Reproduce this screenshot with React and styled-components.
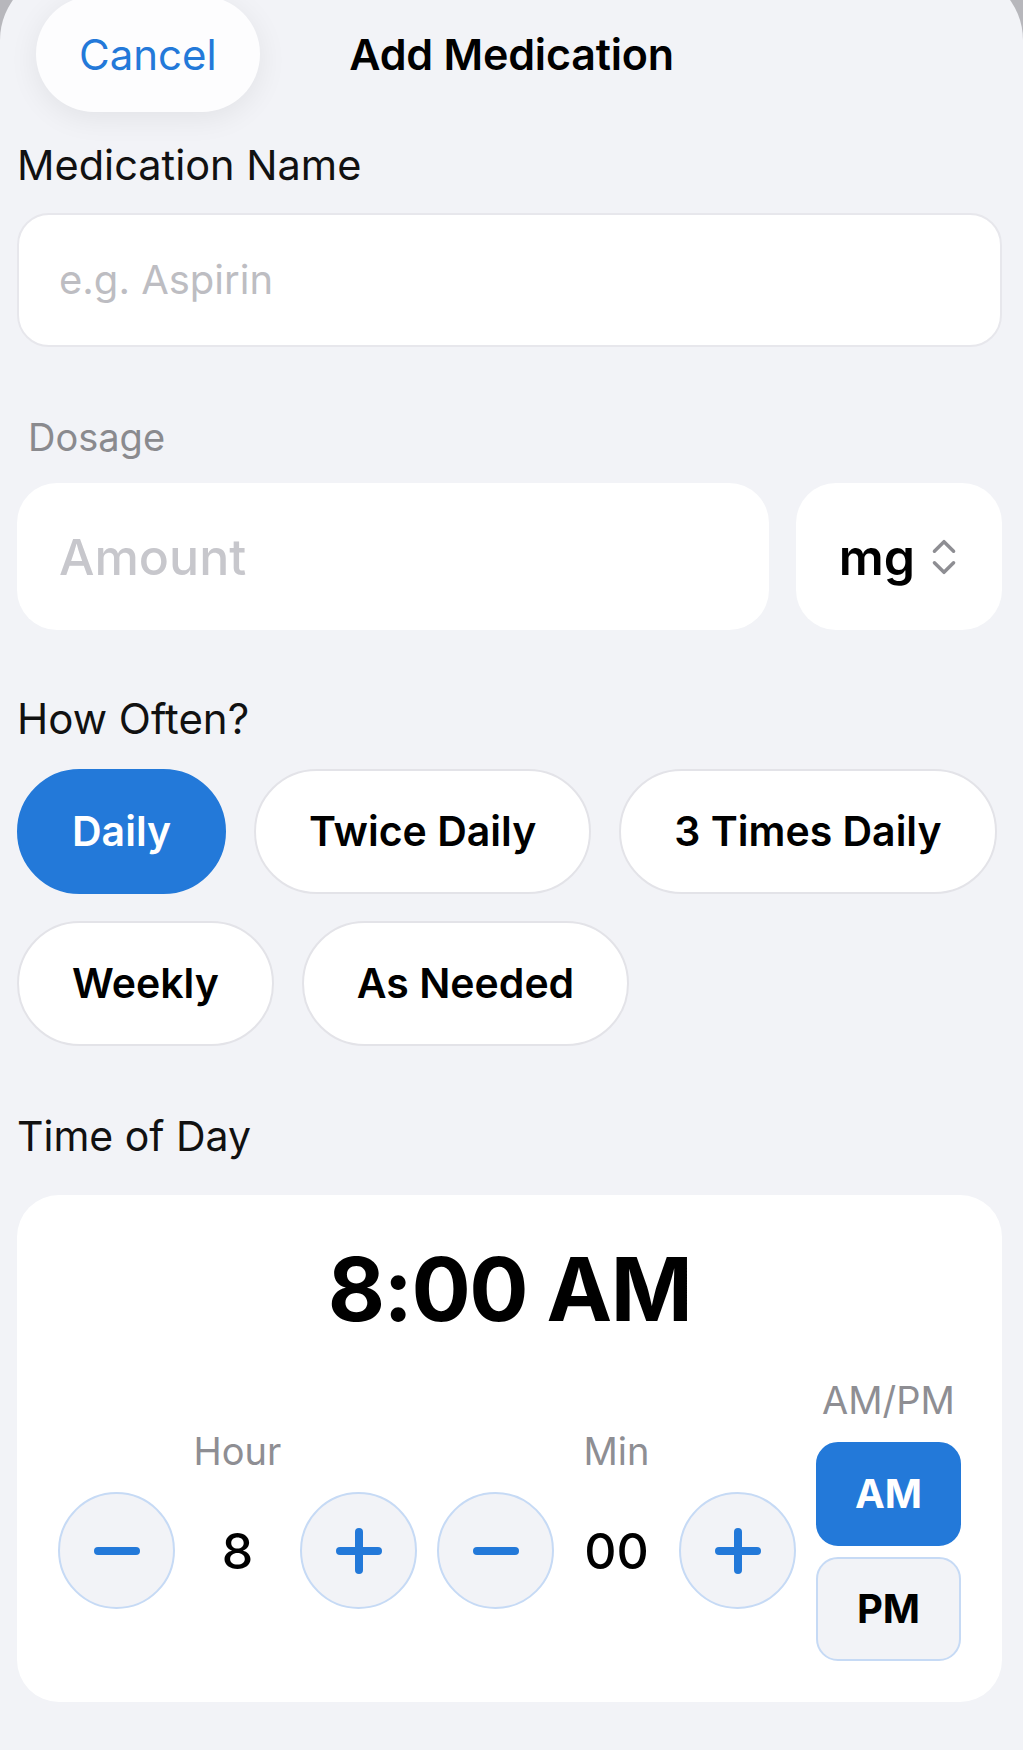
import React from "react";
import styled, { createGlobalStyle } from "styled-components";
import { ChevronsUpDown } from "lucide-react";

const GlobalStyle = createGlobalStyle`
  html, body {
    margin: 0;
    padding: 0;
    background: #b7b7bc;
  }
  body {
    font-family: Inter, "Noto Sans", "Liberation Sans", sans-serif;
    color: #000;
  }
  * { box-sizing: border-box; }
`;

const BLUE = "#2379d9";
const BG = "#f2f3f7";

const Sheet = styled.div`
  margin-top: -28px;
  min-height: 1778px;
  background: ${BG};
  border-radius: 68px 68px 0 0;
  padding: 24px 21px 0 17px;
  overflow: hidden;
`;

const Header = styled.div`
  display: grid;
  grid-template-columns: 1fr auto 1fr;
  align-items: center;
  margin: 0 -21px 0 -17px;
  padding: 0 36px;
`;

const CancelButton = styled.button`
  justify-self: start;
  height: 116px;
  padding: 0 43px;
  border: none;
  border-radius: 58px;
  background: #fdfdfe;
  box-shadow: 0 6px 30px rgba(0, 0, 0, 0.07);
  color: ${BLUE};
  font-family: inherit;
  font-size: 42px;
  font-weight: 400;
`;

const Title = styled.h1`
  margin: 0;
  font-size: 43px;
  font-weight: 600;
  letter-spacing: -0.2px;
`;

const Label = styled.div`
  font-size: ${(p) => p.$size || 41}px;
  line-height: 1.2;
  color: ${(p) => (p.$muted ? "#8a8a8e" : "#111")};
  padding-left: ${(p) => p.$indent || 0}px;
  margin-top: ${(p) => p.$top}px;
  margin-bottom: ${(p) => p.$bottom}px;
`;

const TextInput = styled.input`
  display: block;
  width: 100%;
  height: 134px;
  padding: 0 40px;
  border: 2px solid #e7e7ec;
  border-radius: 32px;
  background: #fff;
  font-family: inherit;
  font-size: 40px;
  color: #000;
  outline: none;
  &::placeholder {
    color: #bdbdc2;
  }
`;

const DosageRow = styled.div`
  display: flex;
  gap: 27px;
  height: 147px;
`;

const AmountInput = styled.input`
  flex: 1;
  min-width: 0;
  padding: 0 42px;
  border: none;
  border-radius: 40px;
  background: #fff;
  font-family: inherit;
  font-size: 50px;
  font-weight: 500;
  outline: none;
  &::placeholder {
    color: #c7c7cc;
  }
`;

const UnitPicker = styled.div`
  width: 206px;
  display: flex;
  align-items: center;
  justify-content: center;
  gap: 6px;
  border-radius: 40px;
  background: #fff;
  font-size: 50px;
  font-weight: 600;
  padding-left: 8px;
  svg {
    color: #8e8e93;
  }
`;

const Chips = styled.div`
  display: flex;
  flex-wrap: wrap;
  gap: 27px 28px;
`;

const Chip = styled.button`
  height: 125px;
  padding: 0 53px;
  border-radius: 63px;
  border: 2px solid ${(p) => (p.$active ? BLUE : "#e3e3e8")};
  background: ${(p) => (p.$active ? BLUE : "#fff")};
  color: ${(p) => (p.$active ? "#fff" : "#000")};
  font-family: inherit;
  font-size: 41px;
  font-weight: 600;
  white-space: nowrap;
`;

const TimeCard = styled.div`
  background: #fff;
  border-radius: 42px;
  padding: 42px 41px 41px;
`;

const BigTime = styled.div`
  text-align: center;
  font-size: 88px;
  font-weight: 700;
  line-height: 1.2;
  letter-spacing: -1.5px;
`;

const PickerRow = styled.div`
  display: flex;
  align-items: center;
  justify-content: space-between;
  margin-top: 34px;
`;

const Group = styled.div`
  display: flex;
  flex-direction: column;
  align-items: center;
  gap: 18px;
`;

const SmallLabel = styled.div`
  font-size: 38px;
  line-height: 46px;
  color: #8e8e93;
`;

const Stepper = styled.div`
  display: flex;
  align-items: center;
`;

const RoundButton = styled.button`
  width: 117px;
  height: 117px;
  border-radius: 50%;
  border: 2.5px solid #c6daf5;
  background: ${BG};
  display: flex;
  align-items: center;
  justify-content: center;
  padding: 0;
`;

const Value = styled.div`
  width: 125px;
  text-align: center;
  font-size: 50px;
  font-weight: 500;
`;

const MeridiemColumn = styled.div`
  width: 145px;
  display: flex;
  flex-direction: column;
  align-items: center;
`;

const MeridiemButton = styled.button`
  width: 145px;
  height: 104px;
  margin-top: ${(p) => p.$top}px;
  border-radius: 22px;
  border: 2.5px solid ${(p) => (p.$active ? BLUE : "#c6daf5")};
  background: ${(p) => (p.$active ? BLUE : BG)};
  color: ${(p) => (p.$active ? "#fff" : "#000")};
  font-family: inherit;
  font-size: 40px;
  font-weight: 700;
`;

const Glyph = ({ plus }) => (
  <svg width="46" height="46" viewBox="0 0 46 46">
    <line x1="4" y1="23" x2="42" y2="23" stroke={BLUE} strokeWidth="8" strokeLinecap="round" />
    {plus && <line x1="23" y1="4" x2="23" y2="42" stroke={BLUE} strokeWidth="8" strokeLinecap="round" />}
  </svg>
);

const TimeStepper = ({ label, value }) => (
  <Group>
    <SmallLabel>{label}</SmallLabel>
    <Stepper>
      <RoundButton><Glyph /></RoundButton>
      <Value>{value}</Value>
      <RoundButton><Glyph plus /></RoundButton>
    </Stepper>
  </Group>
);

const frequencies = ["Daily", "Twice Daily", "3 Times Daily", "Weekly", "As Needed"];

const App = () => {
  return (
    <>
      <GlobalStyle />
      <Sheet>
        <Header>
          <CancelButton>Cancel</CancelButton>
          <Title>Add Medication</Title>
          <span />
        </Header>

        <Label $size={41.5} $top={29} $bottom={22}>Medication Name</Label>
        <TextInput placeholder="e.g. Aspirin" />

        <Label $muted $size={38} $indent={11} $top={68} $bottom={23}>Dosage</Label>
        <DosageRow>
          <AmountInput placeholder="Amount" />
          <UnitPicker>
            mg <ChevronsUpDown size={46} strokeWidth={1.8} />
          </UnitPicker>
        </DosageRow>

        <Label $size={42} $top={64} $bottom={24}>How Often?</Label>
        <Chips>
          {frequencies.map((f) => (
            <Chip key={f} $active={f === "Daily"}>{f}</Chip>
          ))}
        </Chips>

        <Label $top={66} $bottom={34}>Time of Day</Label>
        <TimeCard>
          <BigTime>8:00 AM</BigTime>
          <PickerRow>
            <TimeStepper label="Hour" value="8" />
            <TimeStepper label="Min" value="00" />
            <MeridiemColumn>
              <SmallLabel>AM/PM</SmallLabel>
              <MeridiemButton $active $top={19}>AM</MeridiemButton>
              <MeridiemButton $top={11}>PM</MeridiemButton>
            </MeridiemColumn>
          </PickerRow>
        </TimeCard>
      </Sheet>
    </>
  );
};

export default App;
